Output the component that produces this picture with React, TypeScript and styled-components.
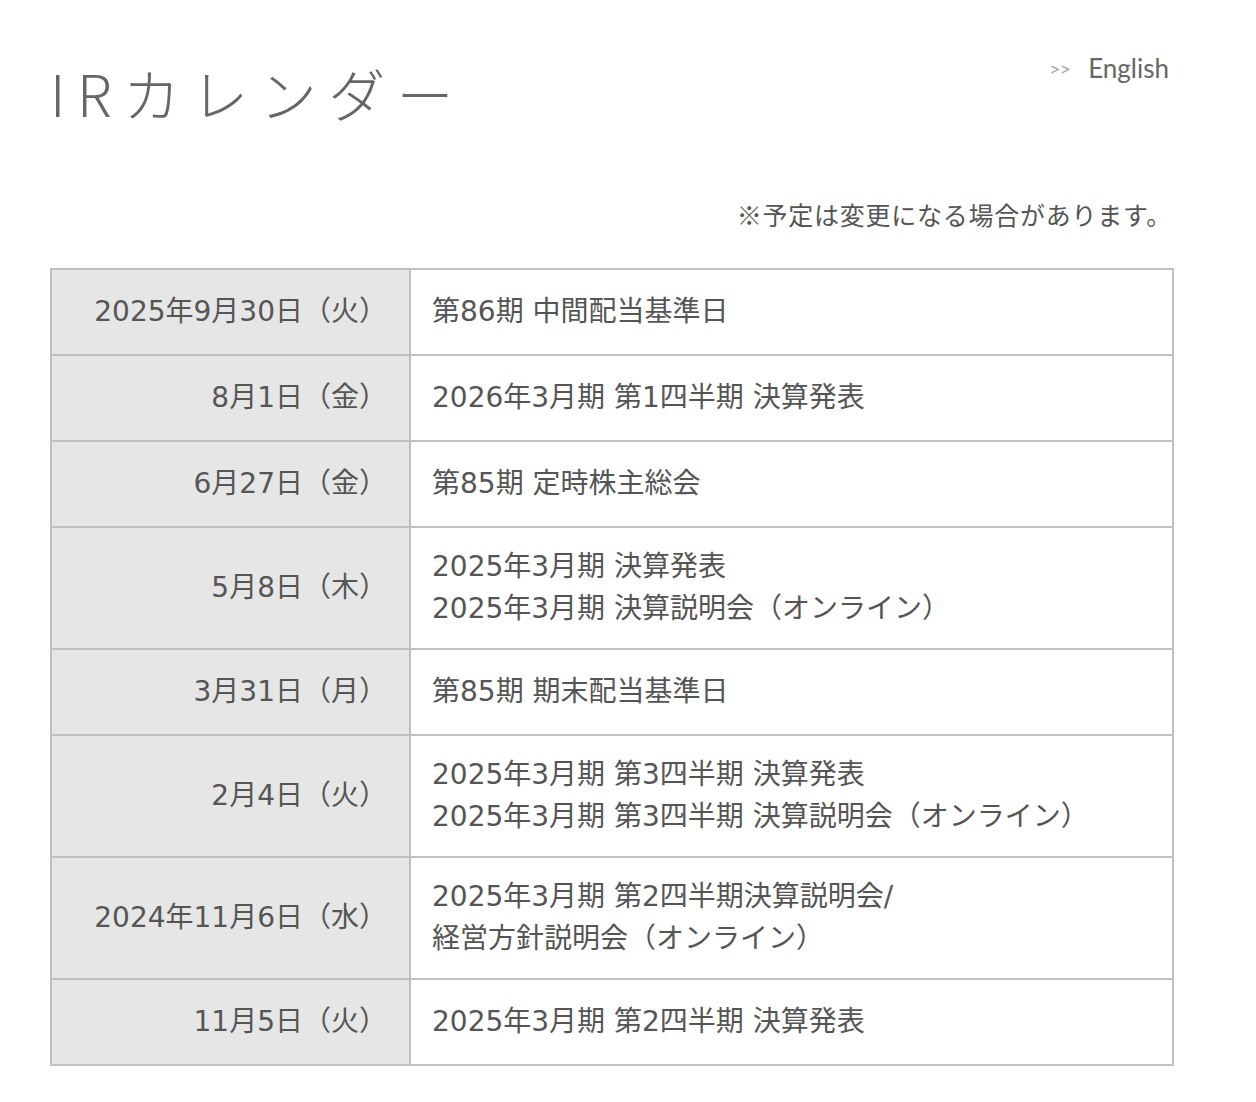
import React from "react";
import styled, { createGlobalStyle } from "styled-components";

const GlobalStyle = createGlobalStyle`
  html, body {
    margin: 0;
    padding: 0;
    background: #ffffff;
  }
  body {
    font-family: "Noto Sans CJK JP", "Noto Sans", sans-serif;
    color: #555555;
  }
`;

const Page = styled.div`
  width: 1124px;
  margin-left: 50px;
  padding-top: 48px;
`;

const Header = styled.header`
  display: flex;
  justify-content: space-between;
  align-items: flex-start;
`;

const Title = styled.h1`
  margin: 0;
  font-family: "Noto Sans CJK JP", sans-serif;
  font-weight: 300;
  font-size: 57px;
  line-height: 88px;
  letter-spacing: 0.2em;
  color: #666666;
`;

const LangLink = styled.a`
  display: flex;
  align-items: center;
  gap: 18px;
  margin-top: 4px;
  margin-right: 5px;
  font-family: "Lato", "Noto Sans", sans-serif;
  font-size: 26px;
  line-height: 32px;
  color: #666666;
  text-decoration: none;
`;

const Chevrons = styled.span`
  font-size: 20px;
  color: #aaaaaa;
  letter-spacing: -1px;
`;

const Note = styled.p`
  margin: 62px 2px 0 0;
  text-align: right;
  font-size: 25px;
  line-height: 32px;
  letter-spacing: 0.03em;
  color: #555555;
`;

const Table = styled.table`
  width: 100%;
  margin-top: 38px;
  border-collapse: collapse;
  border: 2px solid #c0c0c0;
`;

const Row = styled.tr`
  border-bottom: 2px solid #c0c0c0;
`;

const cellText = `
  font-family: "DejaVu Sans", "Noto Sans CJK JP", sans-serif;
  font-size: 28px;
  line-height: 42px;
  color: #555555;
  vertical-align: middle;
`;

const DateCell = styled.th`
  ${cellText}
  width: 359px;
  height: 86px;
  box-sizing: border-box;
  padding: 18px 22px 18px 0;
  background: #e6e6e6;
  border-right: 2px solid #c0c0c0;
  text-align: right;
  font-weight: 400;
  white-space: nowrap;
`;

const EventCell = styled.td`
  ${cellText}
  padding: 18px 21px;
  text-align: left;
`;

const Line = styled.div``;

type Entry = { date: string; lines: string[] };

const entries: Entry[] = [
  { date: "2025年9月30日（火）", lines: ["第86期 中間配当基準日"] },
  { date: "8月1日（金）", lines: ["2026年3月期 第1四半期 決算発表"] },
  { date: "6月27日（金）", lines: ["第85期 定時株主総会"] },
  {
    date: "5月8日（木）",
    lines: ["2025年3月期 決算発表", "2025年3月期 決算説明会（オンライン）"],
  },
  { date: "3月31日（月）", lines: ["第85期 期末配当基準日"] },
  {
    date: "2月4日（火）",
    lines: [
      "2025年3月期 第3四半期 決算発表",
      "2025年3月期 第3四半期 決算説明会（オンライン）",
    ],
  },
  {
    date: "2024年11月6日（水）",
    lines: ["2025年3月期 第2四半期決算説明会/", "経営方針説明会（オンライン）"],
  },
  { date: "11月5日（火）", lines: ["2025年3月期 第2四半期 決算発表"] },
];

export default function App() {
  return (
    <>
      <GlobalStyle />
      <Page>
        <Header>
          <Title>IRカレンダー</Title>
          <LangLink href="#">
            <Chevrons>&gt;&gt;</Chevrons>
            English
          </LangLink>
        </Header>
        <Note>※予定は変更になる場合があります。</Note>
        <Table>
          <tbody>
            {entries.map((e, i) => (
              <Row key={i}>
                <DateCell scope="row">{e.date}</DateCell>
                <EventCell>
                  {e.lines.map((l, j) => (
                    <Line key={j}>{l}</Line>
                  ))}
                </EventCell>
              </Row>
            ))}
          </tbody>
        </Table>
      </Page>
    </>
  );
}
